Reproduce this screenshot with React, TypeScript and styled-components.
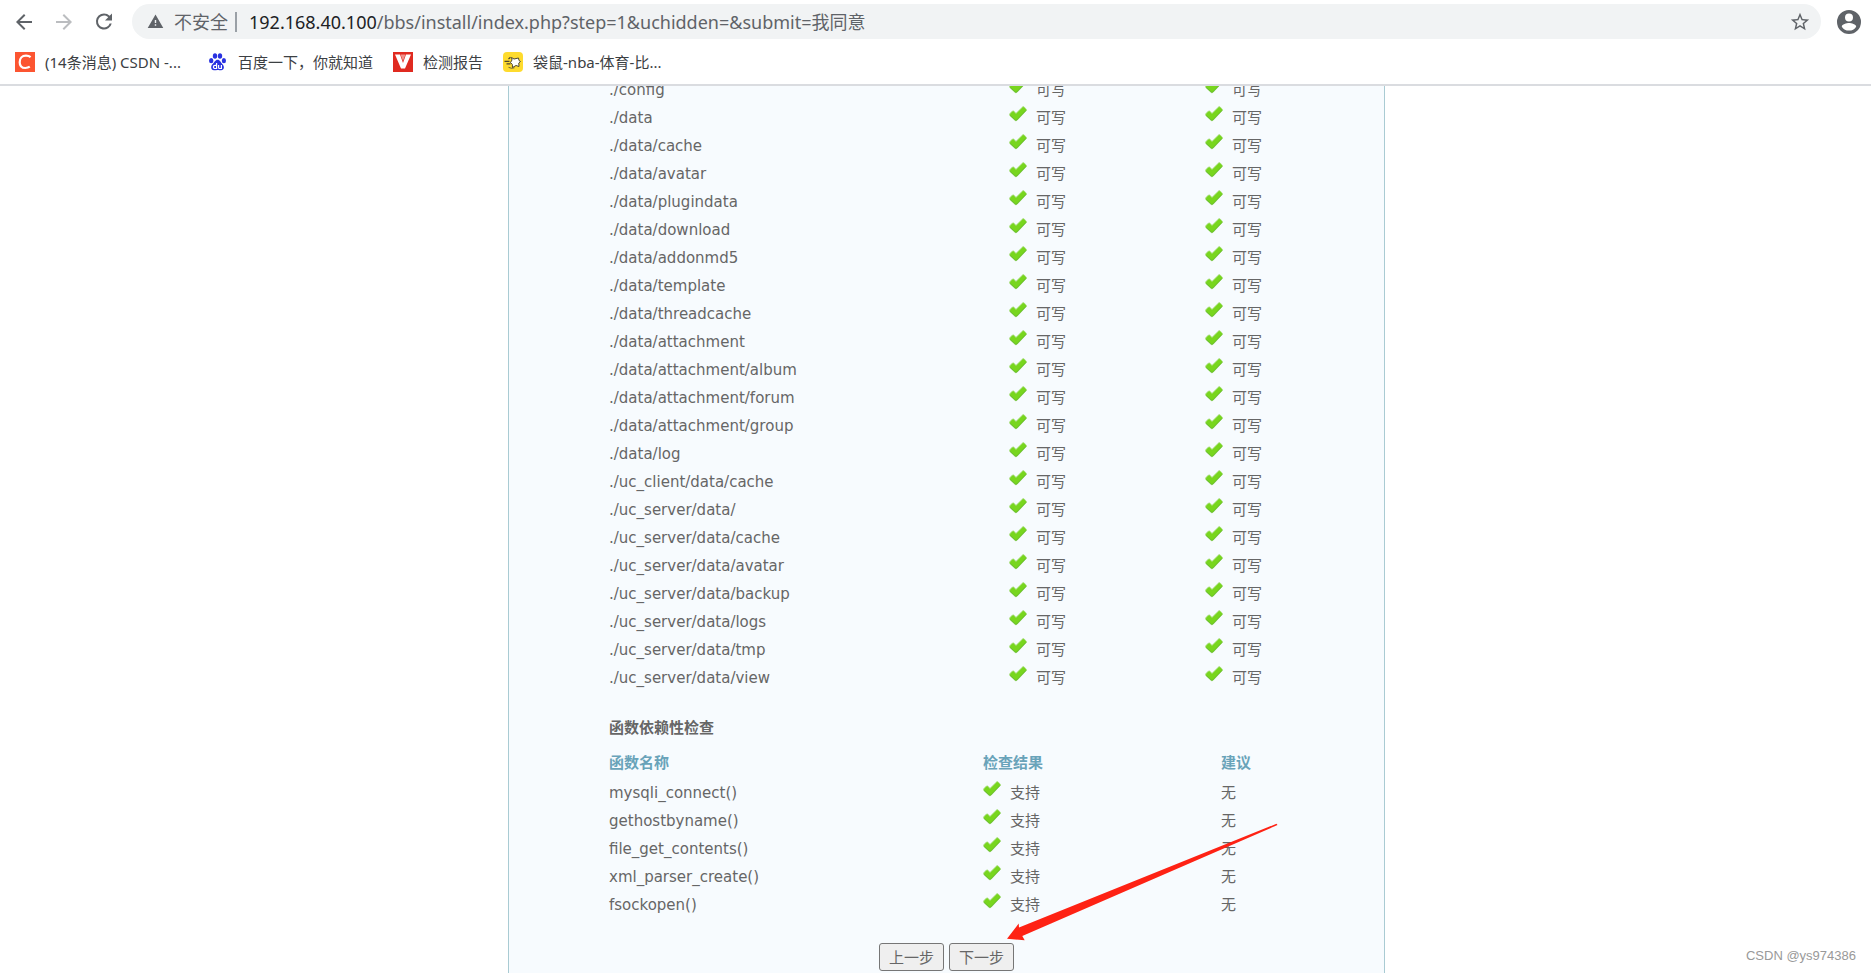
import React from "react";
import styled, { createGlobalStyle } from "styled-components";

const Global = createGlobalStyle`
  * { box-sizing: border-box; }
  body { margin: 0; background: #fff; }
`;

const cjk = `"Noto Sans CJK SC", sans-serif`;

const Window = styled.div`
  position: relative;
  display: flex;
  flex-direction: column;
  height: 100vh;
  overflow: hidden;
  font-family: "Noto Sans", ${cjk};
`;

const Chrome = styled.header`
  flex: none;
  border-bottom: 2px solid #dadce0;
  background: #fff;
`;

const Toolbar = styled.div`
  display: flex;
  align-items: center;
  padding: 4px 10px 0 12px;
  height: 39px;
`;

const ToolButton = styled.button<{ $dim?: boolean }>`
  display: flex;
  align-items: center;
  justify-content: center;
  width: 24px;
  height: 24px;
  margin-right: 16px;
  padding: 0;
  border: 0;
  background: none;
  color: ${(p) => (p.$dim ? "#bbbdc0" : "#5f6368")};
`;

const AddressBar = styled.div`
  display: flex;
  flex: 1;
  align-items: center;
  height: 35px;
  margin-right: 16px;
  padding: 0 10px 0 15px;
  border-radius: 18px;
  background: #f1f3f4;
  color: #5f6368;
  font-size: 18px;
  line-height: 24px;
  white-space: nowrap;
`;

const Security = styled.span`
  margin-left: 10px;
  padding-right: 7px;
`;

const Divider = styled.span`
  width: 2px;
  height: 20px;
  margin-right: 12px;
  background: #9aa0a6;
`;

const Url = styled.span`
  flex: 1;
  b { font-weight: 400; color: #202124; }
`;

const PlainButton = styled.button`
  display: flex;
  padding: 0;
  border: 0;
  background: none;
  color: #5f6368;
`;

const Bookmarks = styled.nav`
  display: flex;
  align-items: center;
  gap: 20px;
  height: 45px;
  padding: 0 15px;
`;

const Bookmark = styled.a<{ $truncated?: boolean }>`
  display: flex;
  align-items: center;
  gap: 10px;
  min-width: ${(p) => (p.$truncated ? "173px" : "0")};
  color: #3c4043;
  font-size: 15px;
  line-height: 20px;
  text-decoration: none;
  white-space: nowrap;
`;

const Viewport = styled.main`
  display: flex;
  flex: 1;
  flex-direction: column;
  align-items: center;
  justify-content: flex-end;
  min-height: 0;
  padding-left: 22px;
  overflow: hidden;
`;

const Panel = styled.section`
  position: relative;
  flex: none;
  width: 100%;
  max-width: 877px;
  padding: 0 100px 2px;
  border: solid #a9cbd3;
  border-width: 0 1px;
  background: #f7fbfe;
  color: #666;
  font-family: "DejaVu Sans", ${cjk};
  font-size: 15px;
`;

const Table = styled.table`
  width: 100%;
  border-collapse: collapse;
  table-layout: fixed;
`;

const Col = styled.col<{ $w?: number }>`
  width: ${(p) => (p.$w ? `${p.$w}px` : "auto")};
`;

const Cell = styled.td`
  height: 28px;
  padding: 0;
  line-height: 28px;
  white-space: nowrap;
`;

const HeadCell = styled.th`
  height: 37px;
  padding: 5px 0 0;
  color: #69a3b9;
  font-weight: 700;
  line-height: 32px;
  text-align: left;
`;

const Heading = styled.h3`
  margin: 22px 0 0;
  font-size: 15px;
  font-weight: 700;
  line-height: 28px;
`;

const Status = styled.span`
  display: flex;
  gap: 9px;
  svg { margin-top: 2px; }
`;

const Buttons = styled.div`
  display: flex;
  justify-content: center;
  gap: 5px;
  margin-top: 24px;
`;

const StepButton = styled.button`
  width: 65px;
  height: 28px;
  padding: 0;
  border: 1px solid #767676;
  border-radius: 3px;
  background: #efefef;
  color: #666;
  font: 15px/24px ${cjk};
`;

const Arrow = styled.svg`
  position: absolute;
  bottom: 32px;
  left: 498px;
`;

const Watermark = styled.span`
  position: absolute;
  right: 15px;
  bottom: 8px;
  color: #999;
  font-family: "Liberation Sans", sans-serif;
  font-size: 13px;
  line-height: 18px;
`;

const paths = [
  "./config", "./data", "./data/cache", "./data/avatar", "./data/plugindata",
  "./data/download", "./data/addonmd5", "./data/template", "./data/threadcache",
  "./data/attachment", "./data/attachment/album", "./data/attachment/forum",
  "./data/attachment/group", "./data/log", "./uc_client/data/cache",
  "./uc_server/data/", "./uc_server/data/cache", "./uc_server/data/avatar",
  "./uc_server/data/backup", "./uc_server/data/logs", "./uc_server/data/tmp",
  "./uc_server/data/view",
];

const functions = [
  "mysqli_connect()", "gethostbyname()", "file_get_contents()",
  "xml_parser_create()", "fsockopen()",
];

const Check = ({ label }: { label: string }) => (
  <Status>
    <svg width="18" height="16" viewBox="0 0 18 16" aria-hidden="true">
      <path d="M.6 8 3.2 5.2 4.6 5 7 7.4 13.8.8 15 .8 17.4 3.4 17.3 4.6 7.8 14.6 6.2 14.6.8 9.6Z" fill="#78d61e" stroke="#a5dc78" strokeWidth=".8" />
      <path d="M1.2 9.4 6.4 14.2 7.7 14.2 17 4.4" fill="none" stroke="#62b52f" strokeWidth=".8" />
    </svg>
    {label}
  </Status>
);

const Icon = ({ d, size = 22 }: { d: string; size?: number }) => (
  <svg width={size} height={size} viewBox="0 0 24 24" fill="currentColor" aria-hidden="true">
    <path d={d} />
  </svg>
);

const CsdnIcon = () => (
  <svg width="20" height="20" viewBox="0 0 20 20" aria-hidden="true">
    <rect width="20" height="20" fill="#fc5531" />
    <path d="M15.6 5.2C14.2 4 12.700 3.700 11 3.700 7 3.700 4.700 6.600 4.700 10.200c0 3.700 2.100 5.800 5.600 5.800 1.700 0 3.200-.4 4.500-1.300" fill="none" stroke="#fff" strokeWidth="2.200" />
  </svg>
);

const BaiduIcon = () => (
  <svg width="20" height="20" viewBox="0 0 20 20" fill="#2932e1" aria-hidden="true">
    <ellipse cx="3.200" cy="8.700" rx="2.200" ry="2.600" />
    <ellipse cx="7" cy="4" rx="2.200" ry="2.800" />
    <ellipse cx="12" cy="4" rx="2.200" ry="2.800" />
    <ellipse cx="15.900" cy="8.700" rx="2.100" ry="2.600" />
    <path d="M9.600 7.800c2.500 0 2.900 2.500 4.700 4.200 2.500 2.200 2.100 6.200-1.200 6.300-1.300 0-2.100-.4-3.500-.4s-2.400.4-3.700.4c-3.200-.2-3.500-4.200-1.200-6.300 2-1.700 2.400-4.200 4.900-4.200Z" />
    <path d="M8.600 11v5.500H7.100c-2.300 0-2.300-3.200 0-3.200h1.500M10.600 13v2.500c0 .7.400 1 1 1h1.800V13" fill="none" stroke="#fff" strokeWidth="1.200" />
  </svg>
);

const ReportIcon = () => (
  <svg width="20" height="20" viewBox="0 0 20 20" aria-hidden="true">
    <rect width="20" height="20" fill="#e02a20" />
    <path d="M2 2.500h5l3 8.500 3-8.500h5L12 16.500H8Z" fill="#fff" />
    <path d="M7.500 2.500h5L10 9Z" fill="#f0948e" />
  </svg>
);

const KangarooIcon = () => (
  <svg width="20" height="20" viewBox="0 0 20 20" aria-hidden="true">
    <rect width="20" height="20" rx="4" fill="#fedb2e" />
    <path d="M9 8 8.500 5.500 11 7 15.500 6 16 8.500 17.500 9.500 15.800 11 16 14.500 13 13.500 9.500 15.500 9.300 12.500 7.500 10.500Z" fill="#fff" stroke="#4c4630" strokeWidth="1" />
    <path d="M1.500 9.300H6.500M3.500 11.800h4M5.500 7 7.500 5.200" stroke="#4c4630" strokeWidth="1.200" />
    <path d="M5.500 15.300q3 1.700 6 .5" fill="none" stroke="#4c4630" strokeWidth=".8" />
  </svg>
);

const bookmarks = [
  { icon: <CsdnIcon />, label: "(14条消息) CSDN -...", truncated: true },
  { icon: <BaiduIcon />, label: "百度一下，你就知道" },
  { icon: <ReportIcon />, label: "检测报告" },
  { icon: <KangarooIcon />, label: "袋鼠-nba-体育-比...", truncated: true },
];

export default function App() {
  return (
    <Window>
      <Global />
      <Chrome>
        <Toolbar>
          <ToolButton aria-label="后退"><Icon d="M20 11H7.830l5.590-5.590L12 4l-8 8 8 8 1.410-1.410L7.830 13H20z" size={24} /></ToolButton>
          <ToolButton aria-label="前进" $dim><Icon d="M4 11h12.170l-5.590-5.590L12 4l8 8-8 8-1.410-1.410L16.170 13H4z" size={24} /></ToolButton>
          <ToolButton aria-label="重新加载"><Icon d="M17.650 6.350A7.960 7.960 0 0 0 12 4a8 8 0 1 0 7.730 10h-2.080A6 6 0 1 1 12 6c1.660 0 3.140.69 4.220 1.780L13 11h7V4z" size={25} /></ToolButton>
          <AddressBar>
            <Icon d="M1 21h22L12 2zm12-3h-2v-2h2zm0-4h-2v-4h2z" size={17} />
            <Security>不安全</Security>
            <Divider />
            <Url><b>192.168.40.100</b>/bbs/install/index.php?step=1&amp;uchidden=&amp;submit=我同意</Url>
            <PlainButton aria-label="收藏"><Icon d="M22 9.240l-7.190-.62L12 2 9.190 8.630 2 9.240l5.460 4.730L5.820 21 12 17.270 18.180 21l-1.630-7.030zM12 15.400l-3.760 2.270 1-4.280-3.320-2.880 4.380-.38L12 6.100l1.710 4.040 4.380.38-3.320 2.880 1 4.280z" size={22} /></PlainButton>
          </AddressBar>
          <PlainButton aria-label="用户"><Icon d="M12 0a12 12 0 1 0 0 24 12 12 0 0 0 0-24zm0 3.600a4 4 0 1 1 0 8 4 4 0 0 1 0-8zm0 17a8.600 8.600 0 0 1-7.200-3.900c0-2.400 4.800-3.700 7.200-3.700s7.200 1.300 7.200 3.700a8.600 8.600 0 0 1-7.200 3.900z" size={24} /></PlainButton>
        </Toolbar>
        <Bookmarks>
          {bookmarks.map((b) => (
            <Bookmark key={b.label} href="#" $truncated={b.truncated}>{b.icon}{b.label}</Bookmark>
          ))}
        </Bookmarks>
      </Chrome>
      <Viewport>
        <Panel>
          <Table>
            <colgroup><Col $w={400} /><Col $w={196} /><Col /></colgroup>
            <tbody>
              {paths.map((p) => (
                <tr key={p}>
                  <Cell>{p}</Cell>
                  <Cell><Check label="可写" /></Cell>
                  <Cell><Check label="可写" /></Cell>
                </tr>
              ))}
            </tbody>
          </Table>
          <Heading>函数依赖性检查</Heading>
          <Table>
            <colgroup><Col $w={374} /><Col $w={238} /><Col /></colgroup>
            <thead>
              <tr><HeadCell>函数名称</HeadCell><HeadCell>检查结果</HeadCell><HeadCell>建议</HeadCell></tr>
            </thead>
            <tbody>
              {functions.map((f) => (
                <tr key={f}>
                  <Cell>{f}</Cell>
                  <Cell><Check label="支持" /></Cell>
                  <Cell>无</Cell>
                </tr>
              ))}
            </tbody>
          </Table>
          <Buttons>
            <StepButton type="button">上一步</StepButton>
            <StepButton type="button">下一步</StepButton>
          </Buttons>
          <Arrow width="271" height="118" viewBox="0 0 271 118" aria-hidden="true">
            <path d="M0 115.700 11.700 100.500 12 104.500 269.500 .8 270.500 2 15.300 113 17.700 117.300Z" fill="#fe2214" />
          </Arrow>
        </Panel>
      </Viewport>
      <Watermark>CSDN @ys974386</Watermark>
    </Window>
  );
}
